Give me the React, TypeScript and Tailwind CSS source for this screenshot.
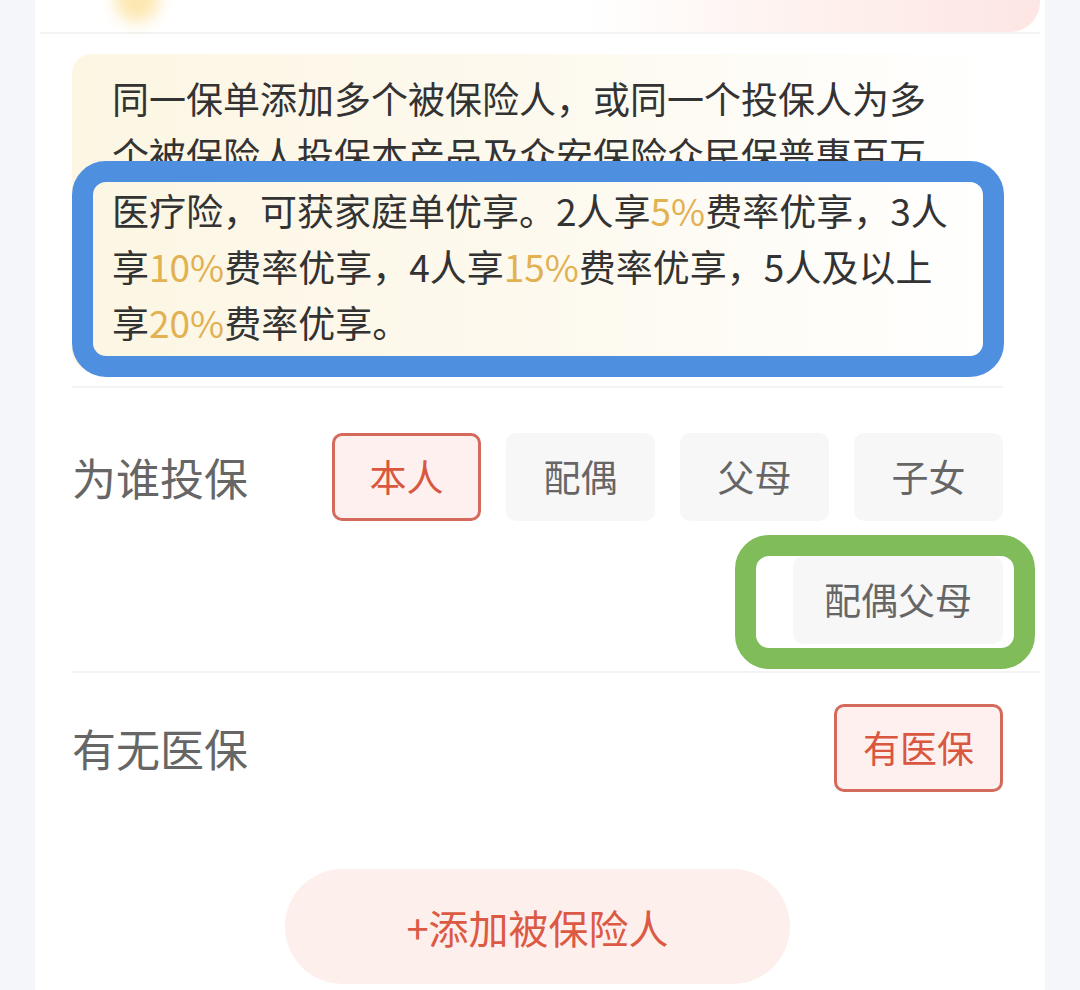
import React from 'react'

// 被保险人信息卡片 — 家庭单说明 + 投保对象选择
const FONT = { fontFamily: '"Noto Sans CJK SC", "Noto Sans", sans-serif' }

const Hi = ({ children }: { children: React.ReactNode }) => (
  <span className="text-[#e2b152]">{children}</span>
)

function Chip({ label, active = false, className = '' }: { label: string; active?: boolean; className?: string }) {
  return (
    <div
      className={
        'flex h-[88px] items-center justify-center rounded-[10px] text-[37px] ' +
        (active
          ? 'border-[3px] border-[#d46a5c] bg-[#fdf0ee] text-[#d9573f] '
          : 'bg-[#f7f7f7] text-[#666666] ') +
        className
      }
    >
      {label}
    </div>
  )
}

export default function App() {
  return (
    <div className="min-h-[990px] bg-[#f5f6fa]" style={FONT}>
      <div className="mx-auto w-[1010px] h-[990px] overflow-hidden bg-white">
        {/* 顶部头图残余 */}
        <div className="relative h-[34px] border-b-2 border-[#f3f3f3] mx-[5px]">
          <div className="absolute -top-[22px] left-[75px] h-[44px] w-[44px] rounded-full bg-[#fde7b0] blur-[8px]" />
          <div className="absolute top-0 right-0 h-[32px] w-[460px] rounded-br-[30px] bg-gradient-to-r from-white/0 via-[#fef1ee] to-[#fde6e4]" />
        </div>

        <div className="pl-[37px] pr-[42px]">
          {/* 家庭单说明 */}
          <div className="relative mt-[20px]">
            <div className="rounded-[20px] bg-gradient-to-r from-[#fcf6e3] via-[#fdf9ee] to-white pl-[40px] pt-[16px] pb-[21px] text-[37px] leading-[56px] text-[#333333] whitespace-nowrap">
              <div>同一保单添加多个被保险人，或同一个投保人为多</div>
              <div>个被保险人投保本产品及众安保险众民保普惠百万</div>
              <div>医疗险，可获家庭单优享。2人享<Hi>5%</Hi>费率优享，3人</div>
              <div>享<Hi>10%</Hi>费率优享，4人享<Hi>15%</Hi>费率优享，5人及以上</div>
              <div>享<Hi>20%</Hi>费率优享。</div>
            </div>
            <div className="pointer-events-none absolute left-0 right-[-1px] top-[107px] h-[216px] rounded-[34px] border-[21px] border-[#4f8fe0]" />
          </div>

          <div className="mt-[15px] h-[2px] bg-[#f3f3f3]" />

          {/* 为谁投保 */}
          <div className="flex pt-[45px] pb-[27px]">
            <div className="flex h-[88px] items-center text-[44px] text-[#666666] shrink-0">为谁投保</div>
            <div className="ml-auto flex w-[672px] flex-wrap justify-end gap-x-[25px] gap-y-[35px]">
              <Chip label="本人" active className="w-[149px]" />
              <Chip label="配偶" className="w-[149px]" />
              <Chip label="父母" className="w-[149px]" />
              <Chip label="子女" className="w-[149px]" />
              <div className="relative">
                <Chip label="配偶父母" className="w-[210px]" />
                <div className="pointer-events-none absolute -left-[58px] -right-[32px] -top-[21px] -bottom-[25px] rounded-[34px] border-[21px] border-[#80bd5a]" />
              </div>
            </div>
          </div>
        </div>

        <div className="ml-[37px] mr-[5px] h-[2px] bg-[#f3f3f3]" />

        {/* 有无医保 */}
        <div className="pl-[37px] pr-[42px]">
          <div className="flex items-center pt-[31px]">
            <div className="text-[44px] text-[#666666]">有无医保</div>
            <Chip label="有医保" active className="ml-auto w-[169px]" />
          </div>

          <div className="mt-[77px] flex justify-center">
            <button className="flex h-[115px] w-[505px] items-center justify-center rounded-full bg-[#fdefec] text-[40px] text-[#dc5a44]">
              +添加被保险人
            </button>
          </div>
        </div>
      </div>
    </div>
  )
}
